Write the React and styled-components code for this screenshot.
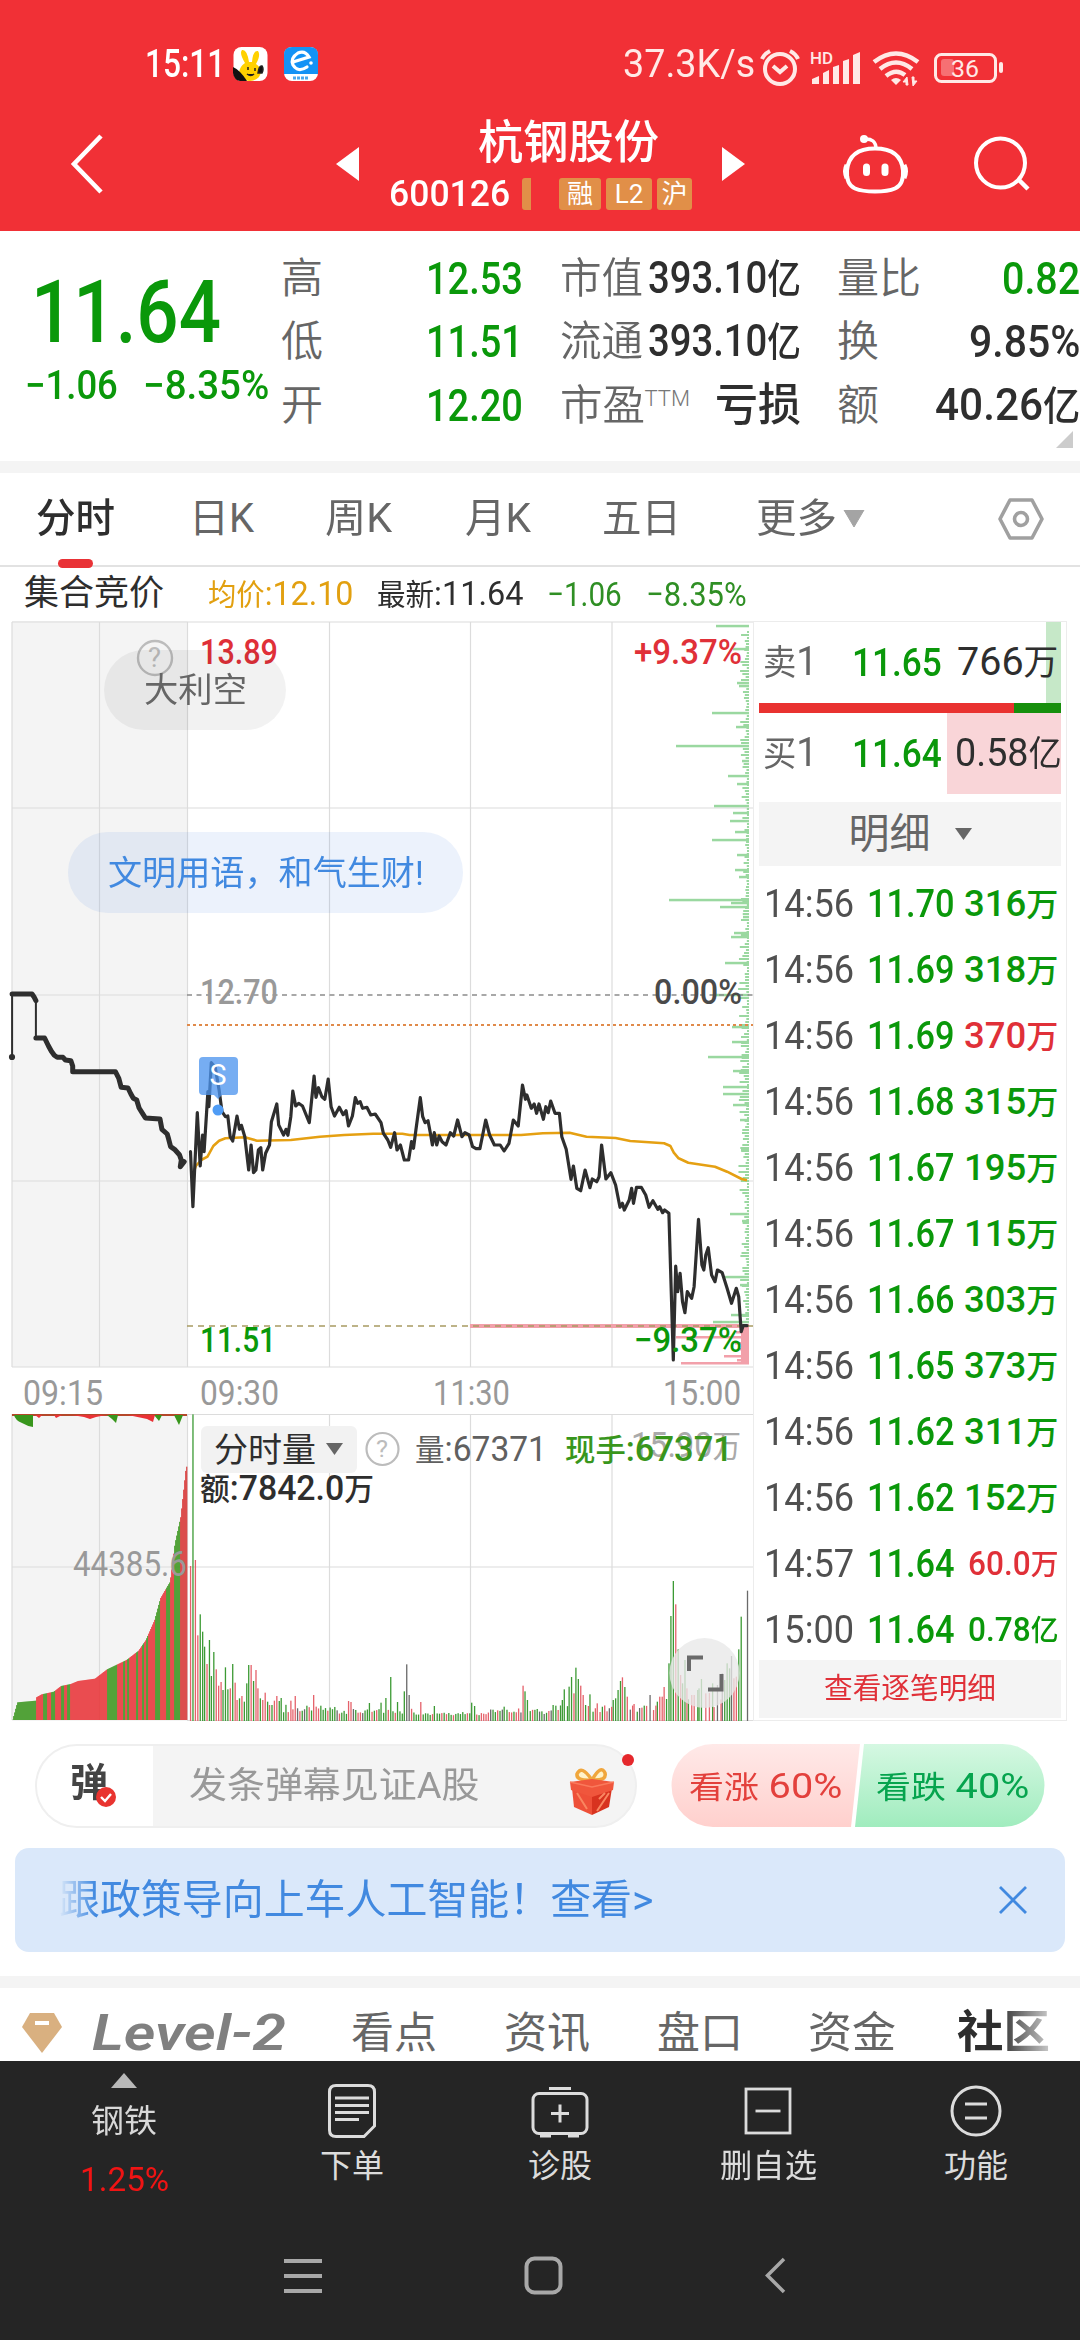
import React, {useLayoutEffect, useRef} from "react";
import styled, {createGlobalStyle} from "styled-components";

const GREEN = '#0a980a';
const RED = '#e03038';
const INK = '#2e2e2e';
const GREY = '#666';
const FONT = 'Roboto, "Noto Sans CJK SC", sans-serif';

// Han characters sit a little smaller than the narrow digits next to them
const mixed = (text, Tag) => {
    const s = String(text);
    if (!/\d/.test(s)) return s;
    return s.split(/([\u4e00-\u9fff]+)/).map((p, i) => i % 2 ? <Tag key={i} fontSize="0.88em">{p}</Tag> : p);
}

// the digits are a condensed face, so every label is squeezed to its width
const Fit = ({w, children, ...rest}) => {
    const ref = useRef(null);
    useLayoutEffect(() => {
        const el = ref.current;
        el.style.transform = `scaleX(${w / el.offsetWidth})`;
    });
    return <FitBox $w={w} {...rest}><span ref={ref}>{mixed(children, Unit)}</span></FitBox>
}

const SvgText = ({x, y, w, size, fill, weight = 500, children}) => (
    <text x={x} y={y} textLength={w} lengthAdjust="spacingAndGlyphs" fontSize={size}
          fontFamily={FONT} fontWeight={weight} fill={fill}>{mixed(children, 'tspan')}</text>
);

const quotes = [
    ['高', 42, '12.53', 97, GREEN, '市值', 83, '393.10亿', 153, INK, '量比', 84, '0.82', 78, GREEN],
    ['低', 42, '11.51', 97, GREEN, '流通', 83, '393.10亿', 153, INK, '换', 42, '9.85%', 111, INK],
    ['开', 42, '12.20', 97, GREEN, '市盈', 85, '亏损', 86, INK, '额', 42, '40.26亿', 145, INK],
];

const periods = [['日K', 65, 74], ['周K', 67, 71], ['月K', 66, 73], ['五日', 79, 71], ['更多', 81, 75]];

const trades = [
    ['14:56', '11.70', '316万', 1], ['14:56', '11.69', '318万', 1], ['14:56', '11.69', '370万', 0],
    ['14:56', '11.68', '315万', 1], ['14:56', '11.67', '195万', 1], ['14:56', '11.67', '115万', 1],
    ['14:56', '11.66', '303万', 1], ['14:56', '11.65', '373万', 1], ['14:56', '11.62', '311万', 1],
    ['14:56', '11.62', '152万', 1], ['14:57', '11.64', '60.0万', 0], ['15:00', '11.64', '0.78亿', 1],
];

const sections = [['看点', 86, 65], ['资讯', 86, 67], ['盘口', 86, 67], ['资金', 88, 65]];

// chart data keeps its own units: 2.063 per px across, 3 per px down
const KX = 2.063;
const toPath = (data, top) => {
    const n = data.trim().split(/\s+/).map(p => p.split(',').map(Number));
    return 'M' + n.map(([x, y]) => `${(x / KX).toFixed(1)} ${(top + y / 3).toFixed(1)}`).join('L');
}

const auction = `25,42 66,42 70,50 74,62 M 74,174 92,174 100,198 106,214 112,226 118,232 130,232 135,240 146,242
 150,258 150,275 238,275 245,295 250,322 264,324 270,342 275,355 282,360 287,384 294,400 300,414 330,417 334,448 345,462 348,478
 352,500 360,508 370,524 374,540 372,560 380,545`;

const price = `393,515 398,680 407,398 413,558 418,465 421,515 429,335 431,380 436,248 444,262 452,330 458,395 465,410
 470,408 475,470 480,483 489,408 494,448 498,436 505,470 513,570 518,495 523,578 528,570 533,510 538,503 542,570
 548,520 556,495 560,425 571,372 575,435 585,465 590,448 594,466 600,410 604,333 610,378 616,370 624,378 638,428
 648,288 652,352 657,323 664,350 670,358 677,297 683,380 690,408 700,382 708,404 714,392 719,438 727,408 733,353
 738,370 743,365 748,385 757,382 765,405 774,402 786,428 791,460 800,480 806,502 814,458 819,510 826,495 834,540
 843,540 849,485 853,505 858,450 867,353 872,410 877,428 883,422 888,460 892,495 896,458 901,495 906,468 912,485
 920,495 929,458 936,468 944,420 953,470 959,458 968,465 975,500 982,506 990,506 1002,420 1010,465 1020,495
 1032,495 1040,513 1050,490 1059,420 1069,438 1078,315 1084,358 1087,345 1096,385 1102,372 1107,400 1112,372
 1121,418 1126,380 1131,398 1136,363 1145,400 1154,400 1159,470 1168,508 1178,598 1183,558 1190,625 1198,632
 1207,570 1217,623 1222,597 1231,605 1236,590 1241,495 1250,597 1260,578 1270,615 1279,682 1284,670 1288,690
 1298,660 1303,625 1307,670 1313,622 1323,622 1332,645 1339,682 1347,662 1357,688 1361,680 1367,698 1371,690
 1380,700 1389,1140 1394,858 1398,935 1403,880 1408,965 1413,998 1418,935 1427,955 1432,920 1441,718 1448,855
 1452,870 1456,825 1461,803 1468,885 1475,905 1480,870 1490,878 1500,925 1509,970 1519,925 1524,950 1529,1055
 1533,1037 1541,1037`;

const average = `400,575 404,558 415,540 428,530 440,498 452,482 465,475 505,472 530,482 600,480 660,470 710,465 770,461
 830,461 845,465 1075,465 1120,460 1175,458 1210,470 1270,474 1300,483 1370,490 1383,498 1390,518 1400,535
 1420,548 1475,560 1500,575 1530,597 1541,601`;

// turnover by price level: [y, left end]
const levels = [[626, 716], [649, 733], [683, 737], [686, 739], [713, 712], [727, 736], [746, 676], [761, 742],
    [776, 728], [784, 737], [806, 714], [813, 733], [821, 730], [832, 735], [840, 712], [855, 737], [870, 735],
    [877, 739], [900, 669], [903, 731], [907, 720], [917, 743], [933, 734], [937, 731], [963, 725], [995, 714],
    [1027, 732], [1042, 732], [1057, 708], [1071, 733], [1087, 723], [1094, 723], [1105, 733], [1120, 740],
    [1150, 741], [1214, 730], [1221, 742], [1277, 725], [1285, 740], [1315, 731], [1322, 713]];
const bidLevels = [[1332, 736], [1337, 676], [1343, 735], [1349, 740], [1356, 724], [1360, 737], [1363, 681]];

const profile = [[25, 1020], [35, 967], [73, 962], [74, 952], [85, 943], [110, 935], [125, 918], [145, 912],
    [160, 903], [195, 896], [220, 868], [260, 840], [285, 812], [300, 780], [318, 720], [330, 655], [350, 605],
    [360, 490], [372, 410], [383, 260], [386, 260]];
const greenRuns = [[25, 73], [88, 96], [104, 112], [125, 132], [138, 144], [220, 240], [254, 258], [262, 266],
    [280, 284], [292, 296], [300, 304], [320, 329], [341, 350], [358, 371]];

const peaks = `393,558,r 398,103,g 403,540,r 408,766,r 413,703,g 418,755,g 422,800,g 427,852,r 432,780,g 436,888,g
 441,816,g 446,868,r 451,917,r 456,906,r 460,930,g 465,862,g 470,928,g 475,925,r 480,852,g 485,908,r 489,960,r
 494,955,g 499,948,r 504,965,g 509,910,g 513,855,g 518,855,r 523,903,g 528,870,r 532,925,r 537,955,g 542,960,r
 547,938,r 552,965,g 556,975,r 561,975,g 566,962,r 571,948,r 576,963,g 580,954,g 600,962,r 609,948,r 647,945,r
 719,963,r 724,966,r 762,969,g 786,968,g 796,954,g 806,891,g 820,966,g 834,934,g 839,853,k 844,945,k 868,966,r
 896,978,g 973,968,g 979,978,g 1040,980,g 1079,917,r 1083,934,g 1088,960,g 1141,975,g 1160,960,g 1164,928,g
 1174,920,g 1179,891,g 1184,940,r 1188,863,g 1193,897,g 1198,917,r 1203,945,r 1208,975,g 1217,943,g 1232,970,r
 1265,960,g 1270,955,g 1275,930,g 1280,903,g 1284,892,r 1289,921,g 1294,950,r 1308,972,r 1341,945,k 1356,965,g
 1361,950,r 1366,950,r 1370,921,r 1375,957,g 1380,850,g 1384,708,g 1389,603,g 1394,673,r 1399,808,g 1404,885,r
 1408,910,g 1413,840,g 1417,925,r 1427,945,r 1432,945,r 1442,925,g 1447,897,g 1456,940,r 1470,910,g 1480,915,k
 1490,880,k 1495,900,g 1500,850,g 1505,865,g 1509,828,k 1514,895,r 1519,890,r 1524,808,g 1529,710,g 1542,632,k`
    .trim().split(/\s+/).map(p => p.split(','));

const noise = i => {
    const v = Math.sin(i * 12.9898) * 43758.5453;
    return v - Math.floor(v);
}
const BAR = {r: '#e5616a', g: '#3c9a34', k: '#6a6a6a'};

const bars = peaks.map(([x, y, c]) => [+x, +y, c]);
for (let x = 585, i = 0; x < 1522; x += 4.8, i++) {
    if (!bars.some(b => Math.abs(b[0] - x) < 2.6)) {
        const lift = x > 1400 ? 55 : x > 1140 || x < 700 ? 22 : x > 850 && x < 1010 ? 6 : 14;
        const tone = noise(i + 7);
        bars.push([x, 1008 - lift * (0.35 + noise(i)) - 6 * noise(i + 40), tone > 0.9 ? 'k' : tone > 0.48 ? 'r' : 'g']);
    }
}

const heightAt = x => {
    const i = profile.findIndex(p => p[0] > x);
    const [a, b] = [profile[i - 1], profile[i]];
    return a[1] + (b[1] - a[1]) * (x - a[0]) / (b[0] - a[0]);
}

const Chart = () => {
    const stripes = [];
    for (let x = 12.2; x < 187; x += 1) {
        const u = x * KX;
        stripes.push([x, 1380 + heightAt(u) / 3, greenRuns.some(([a, b]) => u >= a && u < b) ? '#38961c' : u > 371 ? '#d83432' : '#e93236']);
    }
    const ticks = [];
    for (let y = 631, i = 0; y < 1324; y += 3, i++) {
        ticks.push([y, 749 - 2 - Math.pow(noise(i), 2) * (y > 940 && y < 1200 ? 9 : 7)]);
    }
    const [auctionTop, auctionRest] = auction.split('M');
    return (
        <svg width="753" height="1100" viewBox="0 621 753 1100">
            <rect x="12" y="621" width="175.5" height="746" fill="#f4f4f4"/>
            <rect x="12" y="1414" width="175.5" height="307" fill="#f4f4f4"/>
            <g stroke="#dcdcdc" strokeWidth="1.2" fill="none">
                <path d="M12 622H753M12 808H753M12 995H187M12 1181H753M12 1367H753M12 1414.5H753M12 1567H753M187 1720.5H753"/>
                <path d="M12 622V1367M99.5 622V1367M187.500 622V1367M329.500 622V1367M470.500 622V1367M612 622V1367"/>
                <path d="M12 1414V1720M99.5 1414V1720M187.500 1414V1720M329.500 1414V1720M470.500 1414V1720M612 1414V1720"/>
            </g>

            <g fill="#9ad8a0">
                {ticks.map(([y, x]) => <rect key={y} x={x} y={y} width={749 - x} height="2"/>)}
                {levels.map(([y, x]) => <rect key={y} x={x} y={y - 1.2} width={749 - x} height="2.5"/>)}
            </g>
            <g fill="#f2a0aa">
                <rect x="470" y="1324" width="279" height="4"/>
                <rect x="741" y="1328" width="8" height="36"/>
                {bidLevels.map(([y, x]) => <rect key={y} x={x} y={y - 1} width={749 - x} height="2.5"/>)}
            </g>

            <path d="M187 995H753" stroke="#8c8c8c" strokeWidth="1.6" strokeDasharray="5 4.500"/>
            <path d="M187 1025H753" stroke="#e08a4a" strokeWidth="2" strokeDasharray="3 3"/>
            <path d="M187 1326H753" stroke="#a89a62" strokeWidth="1.600" strokeDasharray="6 5"/>

            <SvgText x="200" y="1004" w="78" size="35" fill="#999">12.70</SvgText>
            <SvgText x="654" y="1004" w="88" size="35" fill="#4a4a4a">0.00%</SvgText>
            <SvgText x="200" y="664" w="78" size="35" fill={RED}>13.89</SvgText>
            <SvgText x="634" y="664" w="108" size="35" fill={RED}>+9.37%</SvgText>

            <path d={toPath(average, 980)} fill="none" stroke="#e5a012" strokeWidth="2.6" strokeLinejoin="round"/>
            <g fill="none" stroke={INK} strokeWidth="3.2" strokeLinejoin="round" strokeLinecap="round">
                <path d={toPath(price, 980)}/>
                <path d={toPath('25,232 25,42', 980) + toPath('74,62 74,174', 980)} strokeWidth="2"/>
                <path d={toPath(auctionTop, 980) + toPath(auctionRest, 980)} strokeWidth="5"/>
                <circle cx="12" cy="1057" r="1.500"/>
            </g>

            <SvgText x="200" y="1352" w="76" size="35" fill={GREEN}>11.51</SvgText>
            <SvgText x="634" y="1352" w="108" size="35" fill={GREEN}>−9.37%</SvgText>

            <path d="M203 1057h31q4 0 4 4v30q0 4-4 4h-12l-4 4-4-4h-11q-4 0-4-4v-30q0-4 4-4Z" fill="#4b93ee" fillOpacity="0.76"/>
            <circle cx="218" cy="1110" r="5.500" fill="#4f9cf5"/>
            <SvgText x="209.5" y="1085" w="17" size="29" weight={400} fill="#fff">S</SvgText>

            <SvgText x="23" y="1405" w="80" size="34.5" fill="#999" weight={400}>09:15</SvgText>
            <SvgText x="200" y="1405" w="79" size="34.5" fill="#999" weight={400}>09:30</SvgText>
            <SvgText x="433" y="1405" w="77" size="34.5" fill="#999" weight={400}>11:30</SvgText>
            <SvgText x="663" y="1405" w="78" size="34.5" fill="#999" weight={400}>15:00</SvgText>

            {stripes.map(([x, y, c]) => <rect key={x} x={x} y={y} width="1.100" height={1720 - y} fill={c}/>)}
            {bars.map(([x, y, c]) => <rect key={x} x={x / KX - 0.6} y={1380 + y / 3} width="1.3" height={341 - y / 3} fill={BAR[c]}/>)}
            <path d="M12 1414H187V1416H12Z" fill="#b5482a"/>
            <path d="M12 1415H33V1427Q27 1426 22 1423Q15 1420 14 1415Z M107 1415H118L116 1423L112 1419Z M154 1415H162L159 1421Z M174 1415H183L181 1420L179 1425Z" fill="#38961c"/>
            <path d="M35 1415H42L39 1418Z M54 1415H62L56 1418Z M72 1415H106L96 1417L90 1419L84 1417Z M128 1415H155L153 1422L147 1419Z" fill="#e93236"/>

            <rect x="201" y="1426" width="156" height="47" rx="6" fill="#f2f2f2"/>
            <SvgText x="214" y="1462" w="102" size="34.500" fill={INK} weight={400}>分时量</SvgText>
            <path d="M326 1443H343L334.500 1455Z" fill="#666"/>
            <circle cx="382.5" cy="1449" r="16" fill="none" stroke="#bcbcbc" strokeWidth="2.2"/>
            <SvgText x="376" y="1457" w="12" size="24" fill="#bcbcbc" weight={400}>?</SvgText>
            <SvgText x="415" y="1461" w="132" size="34.5" fill="#606060" weight={400}>量:67371</SvgText>
            <SvgText x="631" y="1457" w="110" size="34.500" fill="#aaa" weight={400}>15.90万</SvgText>
            <SvgText x="565" y="1461" w="168" size="35" fill="#38961c">现手:67371</SvgText>
            <SvgText x="200" y="1500" w="174" size="34.5" fill={INK}>额:7842.0万</SvgText>
            <SvgText x="73" y="1576" w="114" size="34.500" fill="#999" weight={400}>44385.6</SvgText>

            <circle cx="155" cy="658" r="17" fill="none" stroke="#bcbcbc" strokeWidth="2.4"/>
            <SvgText x="148" y="667" w="13" size="27" fill="#bcbcbc" weight={400}>?</SvgText>

            <circle cx="704.500" cy="1673" r="35" fill="#e8e8e8" fillOpacity="0.78"/>
            <path d="M703 1657.500H689V1671M708 1689.500H721.500V1674" fill="none" stroke="#6a6a6a" strokeWidth="4"/>
        </svg>
    );
}

const StatusIcons = () => (
    <svg width="254" height="48" viewBox="756 36 254 48" fill="none" stroke="#ffe9e6" strokeWidth="4">
        <circle cx="781" cy="65" r="15"/>
        <path d="M774 62l7 6 7-6M763 55q2-5 8-8M799 55q-2-5-8-8"/>
        <g fill="#ffe9e6" stroke="none">
            <text x="811" y="60" fontFamily="Roboto" fontWeight="500" fontSize="16" textLength="23" lengthAdjust="spacingAndGlyphs">HD</text>
            <path d="M813 80v-5l7-3v8zM824 80v-11l6-3v14zM834 80V63l6-2v19zM844 80V57l6-2v25zM854 80V51l7-3v32z"/>
            <path d="M897 81l-5-5q5-4 10 0z"/>
            <path d="M908 73l-4 5h3v3h2zM914 82l4-5h-3v-4h-2z" stroke="#ffe9e6"  strokeWidth="1"/>
            <rect x="942" y="55" width="13" height="17" rx="3" fillOpacity="0.35"/>
            <rect x="1000" y="58" width="4" height="11" rx="2"/>
            <text x="952" y="73" fontFamily="Roboto" fontSize="24" textLength="28" lengthAdjust="spacingAndGlyphs">36</text>
        </g>
        <path d="M875 58q22-17 44 0M881 65q16-13 32 0M887 72q10-8 19-1" strokeWidth="4.500"/>
        <rect x="936.500" y="50.500" width="60" height="27" rx="6" strokeWidth="3"/>
    </svg>
);

const App = () => (
    <Page>
        <Reset/>
        <Header>
            <StatusBar>
                <Fit w={80} size={38} weight={500}>15:11</Fit>
                <svg width="86" height="36" viewBox="0 0 86 36" style={{marginLeft: 8}}>
                    <rect x="0.500" y="1" width="34" height="34" rx="8" fill="#fff"/>
                    <path d="M8 34q-5-11 4-17q-6-10-3-13q5-1 7 12h3q1-12 6-11q3 4-2 13q8 6 3 13q-6 6-14 3z" fill="#ffd100"/>
                    <path d="M0 21q7 3 14 14h-7q-6-1-7-8z" fill="#111"/>
                    <path d="M25 27q1-8 4-7q2 3 0 7zM15 21v3M22 22v3M14 28q4 3 7 0" fill="#111" stroke="#222" strokeWidth="1.500"/>
                    <rect x="51" y="1" width="34" height="34" rx="8" fill="#fff"/>
                    <path d="M51 28V9q0-8 8-8h18q8 0 8 8v19z" fill="#1492f5"/>
                    <path d="M60 16L76 11Q72 4 65 7Q57 12 60 19Q65 27 74 21" fill="none" stroke="#fff" strokeWidth="3.200" strokeLinecap="round"/>
                    <circle cx="78" cy="17" r="1.800" fill="#fff"/>
                    <path d="M60 32h16" stroke="#4aa8ee" strokeWidth="3" strokeDasharray="3 1"/>
                </svg>
                <Fit w={132} ml={304} size={38} color="#ffe9e6">37.3K/s</Fit>
                <StatusIcons/>
            </StatusBar>
            <TitleBar>
                <svg width="34" height="60" viewBox="0 0 34 60"><path d="M31 2L4 30l27 28" fill="none" stroke="#fff" strokeWidth="4.600"/></svg>
                <svg width="24" height="34" style={{marginLeft: 232}}><path d="M0 17L23 0V34Z" fill="#fff"/></svg>
                <Stock>
                    <Fit w={181} size={46} weight={500} h={60} ml={89}>杭钢股份</Fit>
                    <StockLine>
                        <Fit w={121} size={37} weight={500}>600126</Fit>
                        <Stub/>
                        <Tag $w={42}>融</Tag>
                        <Tag $w={46}>L2</Tag>
                        <Tag $w={35}>沪</Tag>
                    </StockLine>
                </Stock>
                <svg width="24" height="34"><path d="M23 17L0 0V34Z" fill="#fff"/></svg>
                <svg width="66" height="60" viewBox="842 134 66 60" style={{marginLeft: 97}} fill="none" stroke="#fff" strokeWidth="4">
                    <path d="M874 148.500q26 0 28 22q1 14-8 18q-7 3-20 3t-20-3q-9-4-8-18q2-22 28-22Z"/>
                    <path d="M846 165q-3 6 0 13M903 165q3 6 0 13" strokeWidth="5"/>
                    <path d="M863 139q12-1 12 10" strokeWidth="3.500"/>
                    <circle cx="863" cy="139" r="4" fill="#fff" stroke="none"/>
                    <path d="M865.500 167v5.500M884 167v5.500" strokeWidth="7" strokeLinecap="round"/>
                </svg>
                <svg width="58" height="58" viewBox="972 136 58 58" style={{marginLeft: 64}} fill="none" stroke="#fff" strokeWidth="4">
                    <circle cx="999.500" cy="164" r="24.500"/>
                    <path d="M1017 180l10 10" strokeWidth="4.500"/>
                </svg>
            </TitleBar>
        </Header>

        <Quote>
            <Last>
                <Fit w={190} ml={31} size={87} weight={500} color={GREEN} h={80}>11.64</Fit>
                <Change>
                    <Fit w={93} size={40} weight={500} color={GREEN}>−1.06</Fit>
                    <Fit w={126} size={40} weight={500} color={GREEN}>−8.35%</Fit>
                </Change>
            </Last>
            <Stats>
                {quotes.map((q, r) => [0, 5, 10].map(o => (
                    <Pair key={`${r}-${o}`}>
                        <Fit w={q[o + 1]} size={42} color={GREY} weight={350}>{q[o]}</Fit>
                        {q[o] === '市盈' && <Ttm>TTM</Ttm>}
                        <Fit w={q[o + 3]} size={45} color={q[o + 4]} weight={500}>{q[o + 2]}</Fit>
                    </Pair>
                )))}
            </Stats>
            <Corner/>
        </Quote>
        <Band $h={12}/>

        <Tabs>
            <Active><Fit w={79} size={40} color={INK} weight={500} h={88}>分时</Fit></Active>
            {periods.map(([t, w, ml]) => <Fit key={t} w={w} ml={ml} size={40} color={GREY} h={90}>{t}</Fit>)}
            <svg width="22" height="18" style={{marginLeft: 6}}><path d="M1 0H21L11 17Z" fill="#a4a4a4" stroke="#a4a4a4" strokeLinejoin="round"/></svg>
            <svg width="46" height="46" viewBox="0 0 46 46" style={{marginLeft: 133}} fill="none" stroke="#a0a0a0" strokeWidth="3.600" strokeLinejoin="round">
                <path d="M12 4H34L44 23L34 42H12L2 23Z"/>
                <circle cx="23" cy="23" r="6.500"/>
            </svg>
        </Tabs>

        <Info>
            <Fit w={140} size={35} color={INK}>集合竞价</Fit>
            <Fit w={145} ml={44} size={34} color="#e2a010">均价:12.10</Fit>
            <Fit w={146} ml={24} size={34} color={INK}>最新:11.64</Fit>
            <Fit w={75} ml={24} size={34} color="#2f8f24">−1.06</Fit>
            <Fit w={101} ml={24} size={34} color="#2f8f24">−8.35%</Fit>
        </Info>

        <Main>
            <ChartArea>
                <Chart/>
                <Bullet $x={104} $y={29} $w={182} $h={80} $bg="rgba(0,0,0,.05)"><Fit w={103} size={34} color={GREY}>大利空</Fit></Bullet>
                <Bullet $x={68} $y={211} $w={395} $h={81} $bg="rgba(80,140,230,.11)"><Fit w={316} size={34} color="#4189e0">文明用语，和气生财!</Fit></Bullet>
            </ChartArea>
            <Book>
                <Order $from={287} $to={302} $bg="#c6e8c8" $h={81}>
                    <Fit w={55} ml={4} size={40} color={GREY}>卖1</Fit>
                    <Fit w={90} ml={34} size={39.5} color={GREEN} weight={500}>11.65</Fit>
                    <Fit w={101} ml={15} size={39.5} color={INK}>766万</Fit>
                </Order>
                <Ratio><i/></Ratio>
                <Order $from={188} $to={302} $bg="#f9d5d8" $h={81}>
                    <Fit w={55} ml={4} size={40} color={GREY}>买1</Fit>
                    <Fit w={90} ml={34} size={39.5} color={GREEN} weight={500}>11.64</Fit>
                    <Fit w={107} ml={13} size={39.5} color={INK}>0.58亿</Fit>
                </Order>
                <Detail>
                    <Fit w={82} size={41} color={GREY}>明细</Fit>
                    <svg width="17" height="13"><path d="M0 0H17L8.500 12Z" fill="#666"/></svg>
                </Detail>
                <Trades>
                    {trades.map(([time, p, amount, down], i) => (
                        <Trade key={i}>
                            <Fit w={90} size={39} color="#505050">{time}</Fit>
                            <Fit w={88} ml={13} size={39} color={GREEN} weight={500}>{p}</Fit>
                            <Fit w={amount.includes('.') ? 90 : 94} size={amount.includes('.') ? 33 : 36.500} color={down ? GREEN : RED} weight={500}>{amount}</Fit>
                        </Trade>
                    ))}
                </Trades>
                <More><Fit w={172} size={29} color={RED}>查看逐笔明细</Fit></More>
            </Book>
        </Main>

        <Barrage>
            <Input>
                <Toggle>
                    <Fit w={38} size={39} weight={700} color="#444">弹</Fit>
                    <Check><svg width="20" height="20"><circle cx="10" cy="10" r="10" fill="#e93430"/><path d="M5 10l4 4 6-7" stroke="#fff" strokeWidth="2.400" fill="none"/></svg></Check>
                </Toggle>
                <Fit w={290} ml={36} size={36.500} color="#999">发条弹幕见证A股</Fit>
                <Gift>
                    <svg width="46" height="50" viewBox="0 0 46 50">
                        <path d="M23 13Q12-3 8 7Q7 14 23 13Q38 14 36 6Q32-3 23 13" fill="#fff2c8" stroke="#f0a63c" strokeWidth="3.500"/>
                        <path d="M3 21L23 27V48L5 40Z" fill="#ee5038"/>
                        <path d="M43 21L23 27V48L40 40Z" fill="#d8331f"/>
                        <path d="M1 15L23 12L45 15L44 23L23 30L2 23Z" fill="#f0563c"/>
                        <path d="M1 15L23 20L45 15" stroke="#fa7a5c" strokeWidth="1.500" fill="none"/>
                        <path d="M8 26L18 42M28 44L40 26M30 32L36 26" stroke="#f98660" strokeWidth="2"/>
                    </svg>
                </Gift>
                <Dot/>
            </Input>
            <Vote>
                <svg width="374" height="84" viewBox="0 0 374 84">
                    <defs>
                        <linearGradient id="up" x2="0" y2="1"><stop stopColor="#ffe9e8"/><stop offset="1" stopColor="#ffd0cd"/></linearGradient>
                        <linearGradient id="down" x2="0" y2="1"><stop stopColor="#d5f8e2"/><stop offset="1" stopColor="#a0ecbe"/></linearGradient>
                    </defs>
                    <path d="M42 0H189L180 83H42A41.500 41.500 0 0 1 42 0Z" fill="url(#up)"/>
                    <path d="M193 0H332A41.500 41.500 0 0 1 332 83H184Z" fill="url(#down)"/>
                </svg>
                <VoteText>
                    <Fit w={153} size={35.500} color="#e3403c">看涨 60%</Fit>
                    <Fit w={153} ml={34} size={35.500} color="#06a44e">看跌 40%</Fit>
                </VoteText>
            </Vote>
        </Barrage>

        <Banner>
            <Marquee><Fit w={594} size={41} color="#4189e0">跟政策导向上车人工智能！查看&gt;</Fit></Marquee>
            <svg width="30" height="30"><path d="M2 2L28 28M28 2L2 28" stroke="#4189e0" strokeWidth="2.800"/></svg>
        </Banner>
        <Band $h={12}/>

        <Sections>
            <svg width="40" height="40" viewBox="0 0 40 40"><path d="M8 0H32L40 14L20 40L0 14Z" fill="#d9b080"/><path d="M13 10H27" stroke="#fff" strokeWidth="4"/></svg>
            <Level><Fit w={194} ml={30} size={50} weight={600} color="#808080">Level-2</Fit></Level>
            {sections.map(([t, w, ml]) => <Fit key={t} w={w} ml={ml} size={43} color={GREY}>{t}</Fit>)}
            <Fade><Fit w={93} size={45} weight={700} color={INK}>社区</Fit></Fade>
        </Sections>

        <Dock>
            <Tool $top={12}>
                <svg width="26" height="15"><path d="M13 0L26 15H0Z" fill="#b8b8b8"/></svg>
                <Fit w={66} size={32} color="#d8d8d8" h={66}>钢铁</Fit>
                <Fit w={89} size={34} color="#f01414" h={50}>1.25%</Fit>
            </Tool>
            <Tool>
                <svg width="52" height="58" viewBox="326 2083 52 58" fill="none" stroke="#dcdcdc" strokeWidth="3">
                    <path d="M336 2085.500H368Q374.500 2085.500 374.500 2092V2126L364 2136.500H336Q329.500 2136.500 329.500 2130V2092Q329.500 2085.500 336 2085.500Z"/>
                    <path d="M335 2098H369M335 2105.500H369M335 2112.500H369M335 2119.500H359"/>
                </svg>
                <Fit w={64} size={32} color="#dcdcdc">下单</Fit>
            </Tool>
            <Tool>
                <svg width="60" height="58" viewBox="530 2083 60 58" fill="none" stroke="#dcdcdc" strokeWidth="3">
                    <rect x="533" y="2093.500" width="54" height="40" rx="6"/>
                    <path d="M549 2088.500H571M551 2113.500H569M560 2104.500V2122.500M540 2136H551M568 2136H579"/>
                </svg>
                <Fit w={64} size={32} color="#dcdcdc">诊股</Fit>
            </Tool>
            <Tool>
                <svg width="50" height="58" viewBox="743 2083 50 58" fill="none" stroke="#dcdcdc" strokeWidth="2.800">
                    <rect x="746" y="2089" width="44" height="44"/>
                    <path d="M755.500 2111H780.500"/>
                </svg>
                <Fit w={97} size={32} color="#dcdcdc">删自选</Fit>
            </Tool>
            <Tool>
                <svg width="54" height="58" viewBox="949 2083 54 58" fill="none" stroke="#dcdcdc" strokeWidth="3">
                    <circle cx="976" cy="2111" r="24"/>
                    <path d="M965 2104H987M965 2118H987"/>
                </svg>
                <Fit w={64} size={32} color="#dcdcdc">功能</Fit>
            </Tool>
        </Dock>
        <NavBar>
            <svg width="38" height="38" stroke="#a8a8a8" strokeWidth="4"><path d="M0 4H38M0 19H38M0 34H38"/></svg>
            <svg width="40" height="40" fill="none" stroke="#a8a8a8" strokeWidth="4"><rect x="2.500" y="2.500" width="34" height="34" rx="8"/></svg>
            <svg width="22" height="38" fill="none" stroke="#a8a8a8" strokeWidth="3.500"><path d="M19 2L2.500 18.500L19 35"/></svg>
        </NavBar>
    </Page>
);
export default App;

const Reset = createGlobalStyle`
  body {
    margin: 0;
    background: #fff;
  }
  svg {
    display: block;
    flex: none;
  }
`;

const Page = styled.div`
  width: 1080px;
  height: 2340px;
  overflow: hidden;
  background: #fff;
  font-family: ${FONT};
`;

const FitBox = styled.div`
  flex: none;
  width: ${props => props.$w}px;
  margin-left: ${props => props.ml || 0}px;
  color: ${props => props.color || '#fff'};
  font-size: ${props => props.size}px;
  font-weight: ${props => props.weight || 400};
  line-height: ${props => props.h || 50}px;
  white-space: nowrap;
  > span {
    display: inline-block;
    transform-origin: left center;
  }
`;

const Unit = styled.span`
  font-size: 0.88em;
`;

const Header = styled.header`
  height: 231px;
  background: #f13036;
`;

const StatusBar = styled.div`
  display: flex;
  align-items: center;
  height: 94px;
  padding: 17px 0 0 145px;
  box-sizing: content-box;
  height: 94px;
`;

const TitleBar = styled.div`
  display: flex;
  align-items: center;
  height: 106px;
  margin-top: 0;
  padding-left: 70px;
`;

const Stock = styled.div`
  width: 333px;
  margin-left: 29px;
`;

const StockLine = styled.div`
  display: flex;
  align-items: center;
  height: 44px;
`;

const Stub = styled.i`
  width: 9px;
  height: 32px;
  margin: 0 23px 0 12px;
  border-radius: 3px 0 0 3px;
  background: #e18f48;
`;

const Tag = styled.span`
  width: ${props => props.$w}px;
  height: 32px;
  margin-left: 5px;
  border-radius: 3px;
  background: #e18f48;
  color: #fff;
  font-size: 26px;
  line-height: 32px;
  text-align: center;
`;

const Quote = styled.section`
  display: flex;
  position: relative;
  height: 230px;
`;

const Last = styled.div`
  width: 281px;
  padding-top: 41px;
`;

const Change = styled.div`
  display: flex;
  gap: 25px;
  margin: 9px 0 0 25px;
`;

const Stats = styled.div`
  display: grid;
  grid-template-columns: 242px 241px 243px;
  grid-auto-rows: 63.5px;
  column-gap: 36.5px;
  padding-top: 16px;
`;

const Pair = styled.div`
  display: flex;
  align-items: center;
  justify-content: space-between;
`;

const Ttm = styled.sup`
  margin: -14px auto 0 0;
  color: #777;
  font-size: 22px;
  font-weight: 300;
`;

const Corner = styled.i`
  position: absolute;
  right: 7px;
  bottom: 13px;
  border-left: 17px solid transparent;
  border-bottom: 17px solid #ccc;
`;

const Band = styled.div`
  height: ${props => props.$h}px;
  background: #f4f4f4;
`;

const Tabs = styled.nav`
  display: flex;
  align-items: center;
  height: 92px;
  padding-left: 36px;
  border-bottom: 2px solid #e2e2e2;
`;

const Active = styled.div`
  position: relative;
  &:after {
    content: '';
    position: absolute;
    left: 22px;
    bottom: -5px;
    width: 35px;
    height: 9px;
    border-radius: 5px;
    background: #e93236;
  }
`;

const Info = styled.div`
  display: flex;
  align-items: center;
  height: 54px;
  padding-left: 24px;
`;

const Main = styled.section`
  display: flex;
`;

const ChartArea = styled.div`
  position: relative;
  width: 753px;
`;

const Bullet = styled.div`
  position: absolute;
  left: ${props => props.$x}px;
  top: ${props => props.$y}px;
  width: ${props => props.$w}px;
  height: ${props => props.$h}px;
  display: flex;
  align-items: center;
  justify-content: center;
  border-radius: 40px;
  background: ${props => props.$bg};
`;

const Book = styled.div`
  box-sizing: border-box;
  width: 314px;
  height: 1100px;
  padding-left: 5px;
  border: 1px solid #ececec;
`;

const Order = styled.div`
  display: flex;
  align-items: center;
  width: 302px;
  height: ${props => props.$h}px;
  background: linear-gradient(${props => props.$bg}, ${props => props.$bg}) ${props => props.$from}px 0 / ${props => props.$to - props.$from}px 100% no-repeat;
`;

const Ratio = styled.div`
  width: 302px;
  height: 10px;
  background: #178f0c;
  i {
    display: block;
    width: 255px;
    height: 10px;
    background: #e93230;
  }
`;

const Detail = styled.div`
  display: flex;
  align-items: center;
  justify-content: center;
  gap: 24px;
  width: 302px;
  height: 64px;
  margin-top: 8px;
  background: #f4f4f4;
`;

const Trades = styled.div`
  display: grid;
  grid-auto-rows: 66px;
  width: 300px;
  padding: 5px 0 0 5px;
`;

const Trade = styled.div`
  display: flex;
  align-items: center;
  > :last-child {
    margin-left: auto;
    margin-right: 6px;
  }
`;

const More = styled.div`
  display: flex;
  align-items: center;
  justify-content: center;
  width: 302px;
  height: 58px;
  margin-top: -3px;
  background: #f4f4f4;
  padding-left: 0;
`;

const Barrage = styled.section`
  display: flex;
  height: 84px;
  padding: 23px 35px 0;
`;

const Input = styled.div`
  position: relative;
  box-sizing: border-box;
  display: flex;
  align-items: center;
  width: 603px;
  height: 84px;
  border: 2px solid #efefef;
  border-radius: 42px;
  background: #f4f4f4;
`;

const Toggle = styled.div`
  position: relative;
  display: flex;
  align-items: center;
  box-sizing: border-box;
  width: 116px;
  height: 80px;
  padding: 0 0 6px 33px;
  border-radius: 40px 0 0 40px;
  background: #fff;
`;

const Check = styled.i`
  position: absolute;
  left: 59px;
  top: 41px;
`;

const Gift = styled.div`
  margin: 12px 0 0 90px;
`;

const Dot = styled.i`
  position: absolute;
  right: 1px;
  top: 8px;
  width: 12px;
  height: 12px;
  border-radius: 50%;
  background: #e5282c;
`;

const Vote = styled.div`
  position: relative;
  margin-left: 34px;
`;

const VoteText = styled.div`
  position: absolute;
  top: 17px;
  left: 18px;
  display: flex;
`;

const Banner = styled.section`
  display: flex;
  align-items: center;
  justify-content: space-between;
  height: 104px;
  margin: 20px 15px 24px;
  padding: 0 37px 0 44px;
  border-radius: 14px;
  background: #dae8fa;
`;

const Marquee = styled.div`
  mask-image: linear-gradient(90deg, transparent, #000 36px);
`;

const Sections = styled.nav`
  display: flex;
  align-items: center;
  height: 57px;
  padding: 16px 0 0 22px;
  overflow: hidden;
`;

const Level = styled.div`
  font-style: italic;
`;

const Fade = styled.div`
  margin-left: 61px;
  mask-image: linear-gradient(90deg, #000 45%, rgba(0, 0, 0, .25));
`;

const Dock = styled.footer`
  display: grid;
  grid-template-columns: 248px repeat(4, 208px);
  height: 150px;
  background: #252525;
`;

const Tool = styled.div`
  display: flex;
  flex-direction: column;
  align-items: center;
  padding-top: ${props => props.$top || 22}px;
`;

const NavBar = styled.div`
  display: flex;
  align-items: center;
  justify-content: space-between;
  box-sizing: border-box;
  height: 130px;
  padding: 0 293px 0 284px;
  background: #252525;
`;
